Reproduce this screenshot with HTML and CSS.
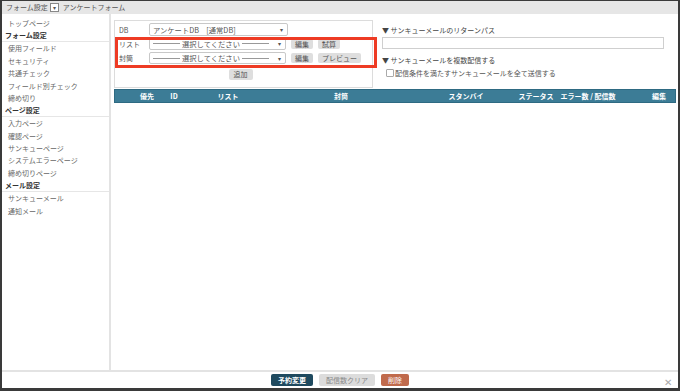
FILE: index.html
```html
<!DOCTYPE html>
<html lang="ja">
<head>
  <meta charset="UTF-8">
  <title>アンケートフォーム</title>
  <link rel="stylesheet" href="styles.css">
</head>
<body>
  <div class="frame">
    <div class="topbar">
      <span>フォーム設定</span>
      <span class="dd">▾</span>
      <span>アンケートフォーム</span>
    </div>

    <div class="middle">
      <div class="sidebar">
        <div class="item">トップページ</div>
        <div class="head">フォーム設定</div>
        <div class="item">使用フィールド</div>
        <div class="item">セキュリティ</div>
        <div class="item">共通チェック</div>
        <div class="item">フィールド別チェック</div>
        <div class="item">締め切り</div>
        <div class="head">ページ設定</div>
        <div class="item">入力ページ</div>
        <div class="item">確認ページ</div>
        <div class="item">サンキューページ</div>
        <div class="item">システムエラーページ</div>
        <div class="item">締め切りページ</div>
        <div class="head">メール設定</div>
        <div class="item">サンキューメール</div>
        <div class="item">通知メール</div>
      </div>

      <div class="main">
        <div class="upper">
          <div class="formbox">
            <div class="row">
              <span class="label">DB</span>
              <div class="select wide"><span>アンケートDB　[通常DB]</span><span class="arrow">▾</span></div>
            </div>
            <div class="row">
              <span class="label">リスト</span>
              <div class="select"><span class="dash"></span><span class="ph">選択してください</span><span class="dash"></span><span class="arrow">▾</span></div>
              <span class="btn">編集</span>
              <span class="btn">試算</span>
            </div>
            <div class="row">
              <span class="label">封筒</span>
              <div class="select"><span class="dash"></span><span class="ph">選択してください</span><span class="dash"></span><span class="arrow">▾</span></div>
              <span class="btn">編集</span>
              <span class="btn">プレビュー</span>
            </div>
            <div class="addrow"><span class="btn">追加</span></div>
            <div class="highlight"></div>
          </div>

          <div class="options">
            <div class="opt-title">▼ サンキューメールのリターンパス</div>
            <div class="textbox"></div>
            <div class="opt-title second">▼ サンキューメールを複数配信する</div>
            <label class="check"><span class="box"></span>配信条件を満たすサンキューメールを全て送信する</label>
          </div>
        </div>

        <div class="thead">
          <span class="cell" style="width:22px"></span>
          <span class="cell" style="width:20px">優先</span>
          <span class="cell" style="width:34px">ID</span>
          <span class="cell" style="width:74px">リスト</span>
          <span class="cell" style="width:152px">封筒</span>
          <span class="cell" style="width:98px">スタンバイ</span>
          <span class="cell" style="width:42px">ステータス</span>
          <span class="cell" style="width:62px">エラー数 / 配信数</span>
          <span class="cell" style="width:80px">編集</span>
        </div>
      </div>
    </div>

    <div class="footer">
      <span class="fbtn navy">予約変更</span>
      <span class="fbtn grey">配信数クリア</span>
      <span class="fbtn rust">削除</span>
      <span class="close">✕</span>
    </div>
  </div>
</body>
</html>
```

FILE: styles.css
```css
html, body {
  margin: 0;
  padding: 0;
}
body {
  font-family: "Noto Sans CJK JP", "Noto Sans", sans-serif;
  font-size: 7px;
  color: #444;
  background: #333;
}
.frame {
  width: 680px;
  height: 391px;
  box-sizing: border-box;
  border: 2px solid #3a3a3a;
  border-top-width: 1px;
  border-bottom-width: 3px;
  background: white;
  display: flex;
  flex-direction: column;
}
.topbar {
  height: 13px;
  background: #e6e6e6;
  display: flex;
  align-items: center;
  padding-left: 4px;
  color: #555;
  line-height: 1;
  flex: none;
}
.dd {
  display: inline-block;
  flex: none;
  width: 7px;
  height: 7px;
  border: 1px solid #888;
  background: white;
  font-size: 6px;
  line-height: 7px;
  text-align: center;
  margin: 0 4px 0 2px;
}
.middle {
  flex: 1;
  display: flex;
  min-height: 0;
}
.sidebar {
  flex: none;
  width: 107px;
  border-right: 2px solid #e3e3e3;
  padding-top: 3px;
}
.sidebar .item {
  height: 12.4px;
  line-height: 12px;
  padding-left: 6px;
  color: #666;
  white-space: nowrap;
}
.sidebar .head {
  height: 12.4px;
  line-height: 12px;
  padding-left: 3px;
  font-weight: bold;
  color: #333;
  border-bottom: 1px solid #e6e6e6;
  box-sizing: border-box;
  margin-bottom: 0.6px;
}
.main {
  flex: 1;
  min-width: 0;
  padding: 6px 2px 0 3px;
}
.upper {
  display: flex;
  height: 69px;
}
.formbox {
  flex: none;
  position: relative;
  width: 257px;
  height: 64px;
  border: 1px solid #dcdcdc;
  padding: 2px 0 0 0;
}
.row {
  display: flex;
  align-items: center;
  height: 13px;
  margin-bottom: 1.3px;
}
.label {
  flex: none;
  width: 34px;
  padding-left: 4px;
  box-sizing: border-box;
  color: #555;
}
.select {
  flex: none;
  width: 137px;
  height: 12px;
  box-sizing: border-box;
  border: 1px solid #c8c8c8;
  border-radius: 2px;
  display: flex;
  align-items: center;
  padding: 0 4px 0 3px;
  color: #555;
  font-size: 7.3px;
  white-space: nowrap;
  overflow: hidden;
}
.select.wide {
  width: 139px;
  height: 13px;
  justify-content: space-between;
}
.dash {
  width: 27px;
  height: 0;
  border-top: 1px solid #999;
}
.ph {
  margin: 0 2px;
}
.arrow {
  font-size: 6px;
  color: #555;
  margin-left: auto;
}
.btn {
  display: inline-block;
  flex: none;
  background: #dedede;
  border-radius: 2px;
  height: 10px;
  line-height: 10px;
  padding: 0 4px;
  margin-left: 5px;
  color: #555;
  font-size: 7px;
}
.addrow {
  text-align: center;
  margin-top: 4px;
  padding-right: 6px;
}
.addrow .btn {
  margin-left: 0;
  padding: 0 5px;
  height: 11px;
  line-height: 11px;
}
.highlight {
  position: absolute;
  left: 0;
  top: 16px;
  width: 262px;
  height: 31px;
  box-sizing: border-box;
  border: 3px solid #ee3b24;
}
.options {
  flex: none;
  margin-left: 9px;
  width: 282px;
  padding-top: 5px;
}
.opt-title {
  color: #444;
  height: 11px;
  line-height: 11px;
}
.opt-title.second {
  margin-top: 6px;
}
.textbox {
  height: 12px;
  box-sizing: border-box;
  border: 1px solid #cfcfcf;
  margin-top: 1px;
}
.check {
  display: flex;
  align-items: center;
  color: #555;
  margin: 2px 0 0 4px;
  height: 10px;
}
.check .box {
  width: 6px;
  height: 6px;
  border: 1px solid #aaa;
  border-radius: 1px;
  margin-right: 1px;
}
.thead {
  height: 14px;
  background: #3c7c96;
  border: 1px solid #2e6a82;
  box-sizing: border-box;
  color: white;
  font-weight: bold;
  font-size: 7px;
  display: flex;
  align-items: center;
  overflow: hidden;
}
.cell {
  flex: none;
  display: flex;
  justify-content: center;
  white-space: nowrap;
}
.footer {
  flex: none;
  height: 16px;
  border-top: 2px solid #e3e3e3;
  display: flex;
  align-items: center;
  justify-content: center;
  gap: 6px;
  position: relative;
}
.fbtn {
  height: 12px;
  line-height: 12px;
  border-radius: 2px;
  padding: 0 7px;
  font-size: 7px;
}
.navy {
  background: #1f4a5f;
  color: white;
  font-weight: bold;
}
.grey {
  background: #dcdcdc;
  color: #888;
}
.rust {
  background: #c06a4c;
  color: white;
}
.close {
  position: absolute;
  right: 6px;
  top: 2px;
  color: #aaa;
  font-size: 10px;
}
```
